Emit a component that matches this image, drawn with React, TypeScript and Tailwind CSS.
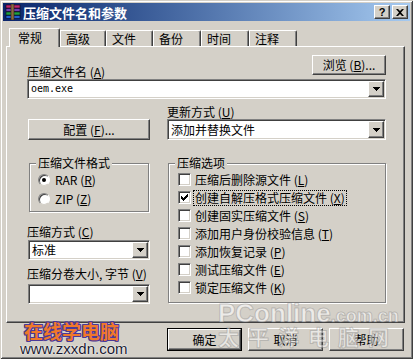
import React from "react"

const raised =
  "bg-[#d4d0c8] border border-t-white border-l-white border-r-[#404040] border-b-[#404040] shadow-[inset_-1px_-1px_0_#808080]"
const sunken =
  "bg-white border border-t-[#808080] border-l-[#808080] border-r-white border-b-white shadow-[inset_1px_1px_0_#404040,inset_-1px_-1px_0_#d4d0c8]"
const etched = "border border-[#808080] shadow-[inset_1px_1px_0_#fff,1px_1px_0_#fff]"

const K = ({ c }: { c: string }) => <span className="underline underline-offset-1">{c}</span>

const Arrow = () => (
  <svg width="7" height="4" viewBox="0 0 7 4">
    <path d="M0 0h7v1H0zM1 1h5v1H1zM2 2h3v1H2zM3 3h1v1H3z" fill="#000" />
  </svg>
)

function Combo({ className, children }: { className: string; children?: React.ReactNode }) {
  return (
    <div className={`${sunken} flex p-[1px] ${className}`}>
      <div className="flex-1 flex items-center pl-[2px] overflow-hidden whitespace-nowrap">{children}</div>
      <div className={`${raised} w-[16px] flex items-center justify-center`}>
        <Arrow />
      </div>
    </div>
  )
}

function Check({ on }: { on?: boolean }) {
  return (
    <div className={`${sunken} w-[13px] h-[13px] flex items-center justify-center shrink-0`}>
      {on && (
        <svg width="7" height="7" viewBox="0 0 7 7">
          <path
            d="M6 0h1v1H6zM5 1h2v1H5zM0 2h1v1H0zM4 2h3v1H4zM0 3h2v1H0zM3 3h3v1H3zM0 4h5v1H0zM1 5h3v1H1zM2 6h1v1H2z"
            fill="#000"
          />
        </svg>
      )}
    </div>
  )
}

function Radio({ on }: { on?: boolean }) {
  return (
    <div className="w-[12px] h-[12px] rounded-full bg-white border border-t-[#808080] border-l-[#808080] border-r-white border-b-[#d4d0c8] shadow-[inset_1px_1px_0_#404040] flex items-center justify-center shrink-0">
      {on && <div className="w-[4px] h-[4px] rounded-full bg-black" />}
    </div>
  )
}

const RarIcon = () => (
  <svg width="16" height="16" viewBox="0 0 16 16">
    <rect x="1" y="1" width="14" height="3" fill="#c02870" stroke="#200010" strokeWidth="0.6" />
    <rect x="1" y="4.5" width="14" height="3" fill="#7040b0" stroke="#100020" strokeWidth="0.6" />
    <rect x="1" y="8" width="14" height="3" fill="#20a040" stroke="#002010" strokeWidth="0.6" />
    <rect x="1" y="11.5" width="14" height="3" fill="#2060d0" stroke="#000820" strokeWidth="0.6" />
    <rect x="6" y="0" width="3" height="16" fill="#8a6a40" stroke="#302010" strokeWidth="0.6" />
  </svg>
)

const tabs: [string, string][] = [
  ["常规", "w-[51px]"],
  ["高级", "w-[46px]"],
  ["文件", "w-[47px]"],
  ["备份", "w-[48px]"],
  ["时间", "w-[48px]"],
  ["注释", "w-[48px]"],
]

const options: [string, string, boolean][] = [
  ["压缩后删除源文件", "L", false],
  ["创建自解压格式压缩文件", "X", true],
  ["创建固实压缩文件", "S", false],
  ["添加用户身份校验信息", "T", false],
  ["添加恢复记录", "P", false],
  ["测试压缩文件", "E", false],
  ["锁定压缩文件", "K", false],
]

export default function App() {
  return (
    <div className="w-[413px] h-[359px] relative bg-[#d4d0c8] p-[3px] flex flex-col overflow-hidden font-['Noto_Sans_CJK_SC',sans-serif] text-[12px] leading-[12px] text-black shadow-[inset_1px_1px_0_#d4d0c8,inset_-1px_-1px_0_#404040,inset_2px_2px_0_#fff,inset_-2px_-2px_0_#808080]">
      {/* title bar */}
      <div className="h-[18px] flex items-center bg-linear-to-r from-[#0a246a] to-[#a6caf0] pl-[2px] pr-[2px]">
        <RarIcon />
        <span className="ml-[2px] text-[13px] leading-[13px] font-bold text-white">压缩文件名和参数</span>
        <div className="ml-auto flex gap-[2px]">
          <div className={`${raised} w-[16px] h-[14px] flex items-center justify-center`}>
            <span className="font-['Liberation_Sans',sans-serif] font-bold text-[11px] leading-[11px]">?</span>
          </div>
          <div className={`${raised} w-[16px] h-[14px] flex items-center justify-center`}>
            <svg width="8" height="7" viewBox="0 0 8 7">
              <path d="M0 0h2l2 2 2-2h2L5 3.5 8 7H6L4 5 2 7H0l3-3.5z" fill="#000" />
            </svg>
          </div>
        </div>
      </div>

      {/* tabs */}
      <div className="mt-[7px] ml-[6px] flex items-end h-[19px]">
        {tabs.map(([t, w], i) =>
          i === 0 ? (
            <div
              key={t}
              className={`${w} h-[19px] relative z-10 bg-[#d4d0c8] border-t border-l border-r border-t-white border-l-white border-r-[#404040] shadow-[inset_-1px_0_0_#808080] rounded-tr-[2px] flex items-center pl-[8px]`}
            >
              {t}
            </div>
          ) : (
            <div
              key={t}
              className={`${w} h-[16px] mb-[1px] bg-[#d4d0c8] border-t border-l border-r border-t-white border-l-white border-r-[#404040] shadow-[inset_-1px_0_0_#808080] rounded-tr-[2px] flex items-center pl-[5px]`}
            >
              {t}
            </div>
          )
        )}
      </div>

      {/* panel */}
      <div className="-mt-[1px] ml-[3px] w-[399px] h-[277px] border border-t-white border-l-white border-r-[#404040] border-b-[#404040] shadow-[inset_-1px_-1px_0_#808080] pt-[8px] pl-[20px] pr-[18px] flex flex-col">
        <div className="flex items-start justify-between">
          <span className="mt-[11px]">
            压缩文件名 (<K c="A" />)
          </span>
          <button className={`${raised} w-[74px] h-[20px] flex items-center justify-center`}>
            浏览 (<K c="B" />)...
          </button>
        </div>
        <Combo className="mt-[1px] h-[20px]">
          <span className="font-['DejaVu_Sans_Mono',monospace] text-[10px] leading-[10px]">oem.exe</span>
        </Combo>

        <div className="mt-[6px] grid grid-cols-[123px_219px] gap-x-[17px]">
          {/* left column */}
          <div className="flex flex-col">
            <button className={`${raised} mt-[14px] ml-[1px] w-[122px] h-[21px] flex items-center justify-center`}>
              配置 (<K c="F" />)...
            </button>
            <fieldset className={`${etched} mt-[17px] ml-[2px] w-[120px] h-[55px]`}>
              <legend className="ml-[6px] px-[2px] leading-[12px] bg-[#d4d0c8]">压缩文件格式</legend>
              <div className="flex flex-col gap-[6px] pt-[4px] pl-[8px]">
                <div className="flex items-center h-[13px] gap-[5px]">
                  <Radio on />
                  <span>
                    RAR (<K c="R" />)
                  </span>
                </div>
                <div className="flex items-center h-[13px] gap-[5px]">
                  <Radio />
                  <span>
                    ZIP (<K c="Z" />)
                  </span>
                </div>
              </div>
            </fieldset>
            <span className="mt-[14px]">
              压缩方式 (<K c="C" />)
            </span>
            <Combo className="mt-[2px] ml-[1px] w-[122px] h-[20px]">
              <span>标准</span>
            </Combo>
            <span className="mt-[8px] whitespace-nowrap">
              压缩分卷大小, 字节 (<K c="V" />)
            </span>
            <Combo className="mt-[4px] ml-[1px] w-[122px] h-[20px]" />
          </div>

          {/* right column */}
          <div className="flex flex-col">
            <span className="h-[14px] leading-[14px]">
              更新方式 (<K c="U" />)
            </span>
            <Combo className="h-[21px]">
              <span>添加并替换文件</span>
            </Combo>
            <fieldset className={`${etched} mt-[17px] ml-[1px] w-[218px] h-[146px]`}>
              <legend className="ml-[6px] px-[2px] leading-[12px] bg-[#d4d0c8]">压缩选项</legend>
              <div className="flex flex-col gap-[5px] pt-[4px] pl-[9px]">
                {options.map(([label, key, on]) => (
                  <div key={label} className="flex items-center h-[13px] gap-[3px]">
                    <Check on={on} />
                    <span
                      className={`px-[1px] py-[1px] whitespace-nowrap ${
                        label === "创建自解压格式压缩文件" ? "[outline:1px_dotted_#000]" : ""
                      }`}
                    >
                      {label} (<K c={key} />)
                    </span>
                  </div>
                ))}
              </div>
            </fieldset>
          </div>
        </div>
      </div>

      {/* dialog buttons */}
      <div className="mt-[5px] flex justify-end gap-[6px] pr-[6px]">
        <button className="w-[75px] h-[23px] border border-black">
          <span className={`${raised} w-full h-full flex items-center justify-center`}>确定</span>
        </button>
        <button className={`${raised} w-[75px] h-[23px] flex items-center justify-center`}>取消</button>
        <button className={`${raised} w-[75px] h-[23px] flex items-center justify-center`}>帮助</button>
      </div>

      {/* watermarks */}
      <div className="absolute left-[24px] top-[321px] pointer-events-none text-[19px] leading-[19px] font-bold text-[#f0782a] [text-shadow:1px_0_0_#4a3a9a,-1px_0_0_#4a3a9a,0_1px_0_#4a3a9a,0_-1px_0_#4a3a9a,1px_1px_0_#4a3a9a,-1px_-1px_0_#4a3a9a,1px_-1px_0_#4a3a9a,-1px_1px_0_#4a3a9a]">
        在线学电脑
      </div>
      <div className="absolute left-[20px] top-[341px] pointer-events-none font-['Liberation_Sans',sans-serif] text-[15px] leading-[15px] text-[#1a1a30] [text-shadow:0_0_2px_#fff,0_0_1px_#fff]">
        www.zxxdn.com
      </div>
      <div className="absolute left-[218px] top-[300px] pointer-events-none font-['Liberation_Sans',sans-serif] font-bold text-white/60 [-webkit-text-stroke:1px_rgba(110,110,110,0.35)] whitespace-nowrap">
        <span className="text-[26px] leading-[26px]">PConline</span>
        <span className="text-[18px] leading-[18px]">.com.cn</span>
      </div>
      <div className="absolute left-[218px] top-[326px] pointer-events-none font-bold text-[21px] leading-[21px] tracking-[9px] text-white/50 [-webkit-text-stroke:1px_rgba(110,110,110,0.35)] whitespace-nowrap">
        太平洋电脑网
      </div>
    </div>
  )
}
